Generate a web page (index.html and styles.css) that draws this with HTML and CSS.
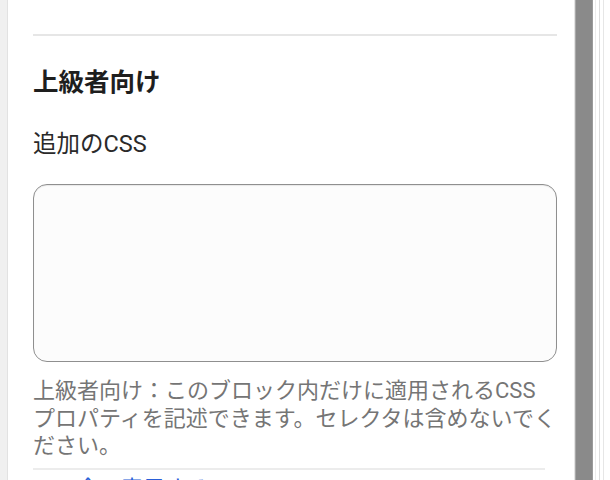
FILE: index.html
```html
<!DOCTYPE html>
<html lang="ja">
<head>
<meta charset="utf-8">
<title>上級者向け</title>
<link rel="stylesheet" href="styles.css">
</head>
<body>
<div class="frame">
  <div class="edge"></div>
  <div class="panel">
    <div class="divider"></div>
    <section class="advanced">
      <h2 class="advanced-title">上級者向け</h2>
      <label class="field-label" for="css">追加のCSS</label>
      <textarea id="css" class="css-input"></textarea>
      <p class="help">上級者向け：このブロック内だけに適用されるCSS<br>プロパティを記述できます。セレクタは含めないでく<br>ださい。</p>
      <div class="divider-short"></div>
      <a class="link" href="#">全て表示する</a>
    </section>
  </div>
  <div class="scrollbar"></div>
  <div class="rail"></div>
</div>
</body>
</html>
```

FILE: styles.css
```css
html, body {
  margin: 0;
  padding: 0;
  height: 480px;
  overflow: hidden;
  background: #ffffff;
  font-family: Roboto, "Noto Sans CJK JP", sans-serif;
}

.frame {
  display: flex;
  height: 480px;
}

.edge {
  width: 7px;
  flex: none;
  background: #f0f0f0;
  border-right: 1px solid #e2e2e2;
}

.panel {
  flex: none;
  width: 524px;
  padding: 0 17px 0 25px;
  border-right: 1px solid #e4e4e4;
  background: #ffffff;
  overflow: hidden;
}

.divider {
  margin-top: 34px;
  height: 2px;
  background: #e6e6e6;
}

.advanced {
  display: flex;
  flex-direction: column;
}

.advanced-title {
  margin: 31px 0 0;
  font-size: 25.5px;
  line-height: 30px;
  font-weight: 700;
  color: #1e1e1e;
}

.field-label {
  display: block;
  margin-top: 33px;
  font-size: 23.5px;
  line-height: 28px;
  color: #2a2a2a;
}

.css-input {
  display: block;
  margin: 26px 0 0;
  box-sizing: border-box;
  width: 524px;
  height: 178px;
  border: 1.5px solid #8f8f8f;
  border-radius: 14px;
  background: #fcfcfc;
  box-shadow: inset 0 1px 1px rgba(0, 0, 0, 0.08);
  resize: none;
  font: inherit;
}

.help {
  margin: 15px -8px 0 0;
  font-size: 22px;
  line-height: 27.5px;
  color: #757575;
}

.divider-short {
  margin-top: 8px;
  width: 512px;
  height: 2px;
  background: #ececec;
}

.link {
  margin-top: 7px;
  padding-left: 44px;
  font-size: 22px;
  line-height: 24px;
  color: #2a5fd8;
  text-decoration: none;
}

.scrollbar {
  flex: none;
  width: 16px;
  background: #8a8a8a;
  border-left: 1px solid #a8a8a8;
  border-right: 1px solid #9a9a9a;
}

.rail {
  flex: 1;
  background: linear-gradient(to right,
    #ffffff 0, #ffffff 2px,
    #ececec 2px, #ececec 3px,
    #ffffff 3px, #ffffff 6px,
    #dcdcdc 6px, #dcdcdc 7px,
    #ffffff 7px, #ffffff 10px,
    #e6e6e6 10px, #e6e6e6 11px,
    #ffffff 11px);
}
```
